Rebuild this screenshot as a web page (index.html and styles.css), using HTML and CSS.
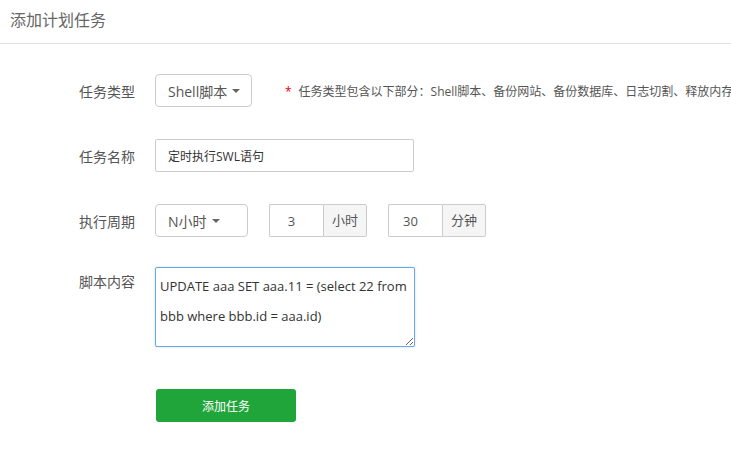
FILE: index.html
```html
<!DOCTYPE html>
<html lang="zh-CN">
<head>
<meta charset="utf-8">
<title>添加计划任务</title>
<link rel="stylesheet" href="styles.css">
</head>
<body>
<div class="page">
  <div class="header">添加计划任务</div>
  <form class="form">
    <div class="row">
      <label class="label">任务类型</label>
      <button type="button" class="dropdown dropdown-type">Shell脚本<span class="caret"></span></button>
      <span class="hint"><span class="star">*</span>任务类型包含以下部分：Shell脚本、备份网站、备份数据库、日志切割、释放内存</span>
    </div>
    <div class="row">
      <label class="label">任务名称</label>
      <input class="text-input" type="text" value="定时执行SWL语句">
    </div>
    <div class="row">
      <label class="label">执行周期</label>
      <button type="button" class="dropdown dropdown-cycle">N小时<span class="caret"></span></button>
      <div class="group">
        <input class="group-input" type="text" value="3">
        <span class="addon">小时</span>
      </div>
      <div class="group">
        <input class="group-input" type="text" value="30">
        <span class="addon">分钟</span>
      </div>
    </div>
    <div class="row row-script">
      <label class="label label-top">脚本内容</label>
      <textarea class="script">UPDATE aaa SET aaa.11 = (select 22 from bbb where bbb.id = aaa.id)</textarea>
    </div>
    <div class="actions">
      <button type="button" class="submit">添加任务</button>
    </div>
  </form>
</div>
</body>
</html>
```
FILE: styles.css
```css
html, body {
  margin: 0;
  padding: 0;
  background: #fff;
  overflow: hidden;
}
body {
  font-family: "Open Sans", "Noto Sans CJK SC", sans-serif;
  color: #555;
}
.page {
  width: 731px;
  height: 465px;
  overflow: hidden;
}
.header {
  height: 43px;
  line-height: 41px;
  padding-left: 10px;
  font-size: 16px;
  color: #666;
  border-bottom: 1px solid #e2e2e2;
}
.form {
  padding-top: 30px;
}
.row {
  display: flex;
  align-items: center;
  height: 33px;
  margin-bottom: 32px;
  white-space: nowrap;
}
.label {
  width: 135px;
  text-align: right;
  margin-right: 20px;
  font-size: 14px;
  color: #555;
  flex-shrink: 0;
}
.dropdown {
  box-sizing: border-box;
  height: 33px;
  border: 1px solid #ccc;
  border-radius: 4px;
  background: #fff;
  font-family: inherit;
  font-size: 14px;
  color: #555;
  padding: 0 0 0 12px;
  text-align: left;
  display: flex;
  align-items: center;
  flex-shrink: 0;
}
.dropdown-type {
  width: 97px;
}
.dropdown-cycle {
  width: 93px;
}
.caret {
  display: inline-block;
  width: 0;
  height: 0;
  margin-left: 5px;
  border-top: 4px solid #666;
  border-left: 4px solid transparent;
  border-right: 4px solid transparent;
}
.hint {
  margin-left: 33px;
  font-size: 12px;
  color: #555;
}
.star {
  color: #ef0000;
  margin-right: 7px;
}
.text-input {
  box-sizing: border-box;
  width: 259px;
  height: 33px;
  border: 1px solid #ccc;
  border-radius: 2px;
  padding: 0 12px;
  font-family: inherit;
  font-size: 12px;
  color: #333;
  outline: none;
}
.group {
  display: flex;
  height: 33px;
  margin-left: 21px;
  flex-shrink: 0;
}
.group-input {
  box-sizing: border-box;
  width: 54px;
  height: 33px;
  border: 1px solid #ccc;
  border-right: none;
  border-radius: 2px 0 0 2px;
  padding: 0 10px 0 0;
  text-align: center;
  font-family: inherit;
  font-size: 13px;
  color: #555;
  outline: none;
}
.addon {
  box-sizing: border-box;
  width: 44px;
  height: 33px;
  line-height: 31px;
  border: 1px solid #ccc;
  border-radius: 0 2px 2px 0;
  background: #f5f5f5;
  text-align: center;
  font-size: 13px;
  color: #555;
}
.row-script {
  height: 80px;
  align-items: flex-start;
  margin-top: -2px;
  margin-bottom: 42px;
}
.label-top {
  padding-top: 5px;
  line-height: 20px;
}
.script {
  box-sizing: border-box;
  width: 260px;
  height: 80px;
  border: 1px solid #6ea6e6;
  border-radius: 2px;
  box-shadow: 0 0 2px rgba(102, 175, 233, 0.5);
  padding: 3px 4px;
  font-family: inherit;
  font-size: 13px;
  line-height: 30px;
  color: #333;
  outline: none;
  overflow: hidden;
}
.actions {
  padding-left: 156px;
}
.submit {
  width: 140px;
  height: 33px;
  border: none;
  border-radius: 3px;
  background: #20a53a;
  color: #fff;
  font-family: inherit;
  font-size: 12px;
}
```
